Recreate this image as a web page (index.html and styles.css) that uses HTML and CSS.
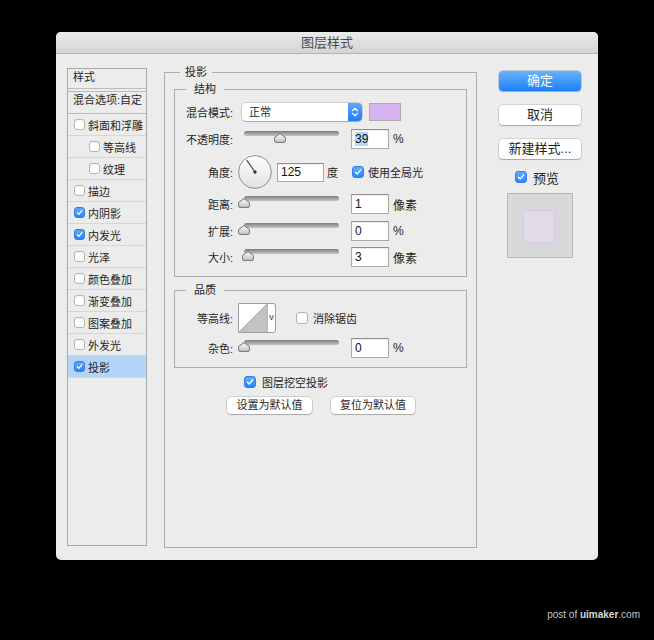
FILE: index.html
```html
<!DOCTYPE html>
<html lang="zh-CN">
<head>
<meta charset="utf-8">
<title>图层样式</title>
<link rel="stylesheet" href="styles.css">
</head>
<body>
<svg class="defs" width="0" height="0" aria-hidden="true">
  <defs>
    <linearGradient id="thumbGrad" x1="0" y1="0" x2="0" y2="1">
      <stop offset="0" stop-color="#fbfbfb"/>
      <stop offset="1" stop-color="#c4c4c4"/>
    </linearGradient>
    <linearGradient id="dialGrad" x1="0" y1="0" x2="0" y2="1">
      <stop offset="0" stop-color="#fefefe"/>
      <stop offset="1" stop-color="#e2e2e2"/>
    </linearGradient>
  </defs>
</svg>
<div class="dialog">
  <div class="titlebar">图层样式</div>
  <div class="content">
    <div class="sidebar">
      <div class="side-head">样式</div>
      <div class="side-blend">混合选项:自定</div>
      <div class="side-item"><span class="cb"></span>斜面和浮雕</div>
      <div class="side-item sub"><span class="cb"></span>等高线</div>
      <div class="side-item sub"><span class="cb"></span>纹理</div>
      <div class="side-item"><span class="cb"></span>描边</div>
      <div class="side-item"><span class="cb on"><svg viewBox="0 0 12 12"><path d="M3 6.2l2.1 2.3L9.1 3.4" fill="none" stroke="#fff" stroke-width="1.7" stroke-linecap="round" stroke-linejoin="round"/></svg></span>内阴影</div>
      <div class="side-item"><span class="cb on"><svg viewBox="0 0 12 12"><path d="M3 6.2l2.1 2.3L9.1 3.4" fill="none" stroke="#fff" stroke-width="1.7" stroke-linecap="round" stroke-linejoin="round"/></svg></span>内发光</div>
      <div class="side-item"><span class="cb"></span>光泽</div>
      <div class="side-item"><span class="cb"></span>颜色叠加</div>
      <div class="side-item"><span class="cb"></span>渐变叠加</div>
      <div class="side-item"><span class="cb"></span>图案叠加</div>
      <div class="side-item"><span class="cb"></span>外发光</div>
      <div class="side-item selected"><span class="cb on"><svg viewBox="0 0 12 12"><path d="M3 6.2l2.1 2.3L9.1 3.4" fill="none" stroke="#fff" stroke-width="1.7" stroke-linecap="round" stroke-linejoin="round"/></svg></span>投影</div>
    </div>

    <div class="main">
      <fieldset class="outer">
        <legend class="legend-outer">投影</legend>
        <div class="outer-body">
          <fieldset class="inner">
            <legend class="legend-inner">结构</legend>
            <div class="inner-body struct">
              <div class="row r-blend">
                <span class="label">混合模式:</span>
                <div class="select">
                  <span class="select-text">正常</span>
                  <span class="stepper"><svg width="14" height="18" viewBox="0 0 14 18"><path d="M4.6 7.6L7 5.2l2.4 2.4M4.6 10.4L7 12.8l2.4-2.4" fill="none" stroke="#fff" stroke-width="1.3" stroke-linecap="round" stroke-linejoin="round"/></svg></span>
                </div>
                <span class="swatch"></span>
              </div>
              <div class="row r-opacity">
                <span class="label">不透明度:</span>
                <div class="slider">
                  <div class="track"></div>
                  <svg class="thumb" style="left:36px" width="12" height="10" viewBox="0 0 12 10"><path d="M6 0.6L11.4 4.4V8Q11.4 9.4 10 9.4H2Q0.6 9.4 0.6 8V4.4Z" fill="url(#thumbGrad)" stroke="#767676"/></svg>
                </div>
                <span class="field w38"><span class="sel">39</span></span>
                <span class="unit">%</span>
              </div>
              <div class="row r-angle">
                <span class="label">角度:</span>
                <svg class="dial" width="34" height="34" viewBox="0 0 34 34">
                  <circle cx="17" cy="17" r="16.4" fill="url(#dialGrad)" stroke="#8f8f8f" stroke-width="1"/>
                  <line x1="17" y1="17" x2="9" y2="5.6" stroke="#4a4a4a" stroke-width="1.2" stroke-linecap="round"/>
                  <circle cx="17" cy="17" r="1.7" fill="#333"/>
                </svg>
                <span class="field w47 h19">125</span>
                <span class="unit deg">度</span>
                <span class="cb on global"><svg viewBox="0 0 12 12"><path d="M3 6.2l2.1 2.3L9.1 3.4" fill="none" stroke="#fff" stroke-width="1.7" stroke-linecap="round" stroke-linejoin="round"/></svg></span>
                <span class="cb-text">使用全局光</span>
              </div>
              <div class="row r-dist">
                <span class="label">距离:</span>
                <div class="slider">
                  <div class="track"></div>
                  <svg class="thumb" style="left:0px" width="12" height="10" viewBox="0 0 12 10"><path d="M6 0.6L11.4 4.4V8Q11.4 9.4 10 9.4H2Q0.6 9.4 0.6 8V4.4Z" fill="url(#thumbGrad)" stroke="#767676"/></svg>
                </div>
                <span class="field w38">1</span>
                <span class="unit">像素</span>
              </div>
              <div class="row r-spread">
                <span class="label">扩展:</span>
                <div class="slider">
                  <div class="track"></div>
                  <svg class="thumb" style="left:0px" width="12" height="10" viewBox="0 0 12 10"><path d="M6 0.6L11.4 4.4V8Q11.4 9.4 10 9.4H2Q0.6 9.4 0.6 8V4.4Z" fill="url(#thumbGrad)" stroke="#767676"/></svg>
                </div>
                <span class="field w38">0</span>
                <span class="unit">%</span>
              </div>
              <div class="row r-size">
                <span class="label">大小:</span>
                <div class="slider">
                  <div class="track"></div>
                  <svg class="thumb" style="left:4px" width="12" height="10" viewBox="0 0 12 10"><path d="M6 0.6L11.4 4.4V8Q11.4 9.4 10 9.4H2Q0.6 9.4 0.6 8V4.4Z" fill="url(#thumbGrad)" stroke="#767676"/></svg>
                </div>
                <span class="field w38">3</span>
                <span class="unit">像素</span>
              </div>
            </div>
          </fieldset>

          <fieldset class="inner quality">
            <legend class="legend-inner">品质</legend>
            <div class="inner-body qual">
              <div class="row r-contour">
                <span class="label">等高线:</span>
                <div class="contour">
                  <svg width="28" height="28" viewBox="0 0 28 28"><rect width="28" height="28" fill="#fff"/><polygon points="0,28 28,0 28,28" fill="#c2c2c2"/><line x1="0" y1="28" x2="28" y2="0" stroke="#9a9a9a" stroke-width="0.8"/></svg>
                  <span class="contour-drop">v</span>
                </div>
                <span class="cb anti"></span>
                <span class="cb-text">消除锯齿</span>
              </div>
              <div class="row r-noise">
                <span class="label">杂色:</span>
                <div class="slider">
                  <div class="track"></div>
                  <svg class="thumb" style="left:0px" width="12" height="10" viewBox="0 0 12 10"><path d="M6 0.6L11.4 4.4V8Q11.4 9.4 10 9.4H2Q0.6 9.4 0.6 8V4.4Z" fill="url(#thumbGrad)" stroke="#767676"/></svg>
                </div>
                <span class="field w38">0</span>
                <span class="unit">%</span>
              </div>
            </div>
          </fieldset>

          <div class="knock">
            <span class="cb on"><svg viewBox="0 0 12 12"><path d="M3 6.2l2.1 2.3L9.1 3.4" fill="none" stroke="#fff" stroke-width="1.7" stroke-linecap="round" stroke-linejoin="round"/></svg></span>
            <span class="cb-text">图层挖空投影</span>
          </div>
          <div class="defaults">
            <button class="small-btn b1" type="button">设置为默认值</button>
            <button class="small-btn b2" type="button">复位为默认值</button>
          </div>
        </div>
      </fieldset>
    </div>

    <div class="actions">
      <button class="btn primary" type="button">确定</button>
      <button class="btn" type="button">取消</button>
      <button class="btn" type="button">新建样式...</button>
      <div class="preview-check">
        <span class="cb on"><svg viewBox="0 0 12 12"><path d="M3 6.2l2.1 2.3L9.1 3.4" fill="none" stroke="#fff" stroke-width="1.7" stroke-linecap="round" stroke-linejoin="round"/></svg></span>
        <span class="preview-text">预览</span>
      </div>
      <div class="preview-box"><div class="preview-inner"></div></div>
    </div>
  </div>
</div>
<div class="watermark">post of <b>uimaker</b>.com</div>
</body>
</html>
```

FILE: styles.css
```css
* { box-sizing: border-box; }

html, body {
  margin: 0;
  padding: 0;
}

body {
  width: 654px;
  height: 640px;
  overflow: hidden;
  background: #000;
  font-family: "Liberation Sans", "Noto Sans CJK SC", sans-serif;
  font-size: 11px;
  color: #1f1f1f;
}

.defs { position: absolute; width: 0; height: 0; }

.dialog {
  width: 542px;
  height: 528px;
  margin: 32px 0 0 56px;
  background: #ececec;
  border-radius: 5px;
  overflow: hidden;
}

.titlebar {
  height: 22px;
  line-height: 21px;
  text-align: center;
  font-size: 13px;
  color: #4b4b4b;
  background: linear-gradient(#ebebeb, #d4d4d4);
  border-bottom: 1px solid #b4b4b4;
}

.content {
  display: flex;
  align-items: flex-start;
  padding: 10px 0 0 11px;
}

/* ---------- sidebar ---------- */
.sidebar {
  width: 80px;
  height: 478px;
  margin-top: 4px;
  border: 1px solid #a8a8a8;
  background: #ececec;
}

.side-head {
  height: 20px;
  line-height: 16px;
  padding-left: 5px;
  border-bottom: 1px solid #bcbcbc;
}

.side-blend {
  height: 23px;
  margin-top: 2px;
  line-height: 17px;
  padding-left: 5px;
  border-top: 1px solid #bcbcbc;
  border-bottom: 1px solid #bcbcbc;
}

.side-item {
  height: 22px;
  display: flex;
  align-items: center;
  padding-left: 6px;
  border-bottom: 1px solid #d7d7d7;
}

.side-item.sub { padding-left: 21px; }

.side-item.selected { background: #b5d5f6; }

.side-item .cb {
  width: 11px;
  height: 11px;
  margin-right: 3px;
}

/* ---------- checkboxes ---------- */
.cb {
  display: inline-flex;
  flex: none;
  width: 12px;
  height: 12px;
  border: 1px solid #b3b3b3;
  border-radius: 3px;
  background: #fff;
  box-shadow: inset 0 1px 0 rgba(0, 0, 0, 0.04);
}

.cb.on {
  border-color: #2f7fe8;
  background: linear-gradient(#63acfc, #2b85f7);
}

.cb svg { width: 100%; height: 100%; display: block; }

.cb-text { margin-left: 4px; }

/* ---------- main ---------- */
.main {
  width: 313px;
  height: 484px;
  margin-left: 17px;
  display: flex;
  flex-direction: column;
}

fieldset {
  margin: 0;
  padding: 0;
  min-width: 0;
  border: 1px solid #adadad;
}

legend {
  line-height: 16px;
  font-size: 11px;
}

.outer { flex: 1; }

.legend-outer {
  margin-left: 15px;
  padding: 0 5px;
}

.outer-body { padding: 0 9px; }

.inner { margin-top: 1px; }

.inner.quality { margin-top: 5px; }

.legend-inner {
  margin-left: 11px;
  padding: 0 8px;
}

.inner-body.struct { padding: 6px 0 9px; }
.inner-body.qual { padding: 5px 0 9px; }

.row {
  display: flex;
  align-items: center;
}

.label {
  width: 58px;
  margin-right: 9px;
  text-align: right;
  flex: none;
}

.r-blend { height: 18px; }
.r-opacity { height: 20px; margin-top: 8px; }
.r-angle { height: 34px; margin-top: 6px; }
.r-dist { height: 20px; margin-top: 5px; }
.r-spread { height: 20px; margin-top: 7px; }
.r-size { height: 20px; margin-top: 6px; }
.r-contour { height: 30px; }
.r-noise { height: 20px; margin-top: 5px; }

.select {
  display: flex;
  width: 120px;
  height: 18px;
  background: #fff;
  border-radius: 4px;
  box-shadow: 0 0 0 0.5px rgba(0, 0, 0, 0.25), 0 1px 1px rgba(0, 0, 0, 0.18);
}

.select-text {
  flex: 1;
  padding-left: 7px;
  line-height: 18px;
}

.stepper {
  width: 14px;
  height: 18px;
  border-radius: 0 4px 4px 0;
  background: linear-gradient(#5ea8fb, #1f7cf4);
}

.stepper svg { display: block; }

.swatch {
  width: 32px;
  height: 18px;
  margin-left: 7px;
  background: #d9b3f0;
  border: 1px solid #ababab;
}

.slider {
  position: relative;
  width: 103px;
  height: 20px;
  margin-left: -4px;
  flex: none;
}

.track {
  width: 95px;
  height: 5px;
  margin: 2px 0 0 6px;
  border-radius: 3px;
  background: linear-gradient(#7c7c7c, #a9a9a9 60%, #c4c4c4);
}

.thumb {
  position: absolute;
  top: 4px;
  display: block;
}

.field {
  display: inline-block;
  height: 20px;
  line-height: 18px;
  padding-left: 3px;
  background: #fff;
  border: 1px solid #a9a9a9;
  border-top-color: #8f8f8f;
  box-shadow: inset 0 1px 1px rgba(0, 0, 0, 0.08);
  font-size: 12px;
  color: #111;
  flex: none;
}

.w38 { width: 38px; margin-left: 10px; }
.w47 { width: 47px; margin-left: 5px; }
.h19 { height: 19px; line-height: 17px; }

.sel { background: #b3d7ff; }

.unit { margin-left: 4px; font-size: 12px; }
.unit.deg { margin-left: 3px; font-size: 11px; }

.dial {
  display: block;
  flex: none;
  margin-left: -4px;
}

.cb.global { margin-left: 14px; }

.contour {
  display: flex;
  width: 38px;
  height: 30px;
  margin-left: -4px;
  background: #fff;
  border: 1px solid #9d9d9d;
  border-radius: 0 3px 3px 0;
}

.contour svg { display: block; }

.contour-drop {
  width: 8px;
  border-left: 1px solid #b5b5b5;
  font-size: 9px;
  line-height: 26px;
  text-align: center;
  color: #333;
}

.cb.anti { margin-left: 20px; }
.r-contour .cb-text { margin-left: 5px; }

.knock {
  display: flex;
  align-items: center;
  height: 16px;
  margin-top: 6px;
  padding-left: 70px;
}

.knock .cb-text { margin-left: 6px; }

.defaults {
  display: flex;
  margin-top: 7px;
  padding-left: 53px;
  gap: 19px;
}

.small-btn {
  height: 17px;
  padding: 0;
  border: none;
  border-radius: 4px;
  background: #fff;
  box-shadow: 0 0 0 0.5px rgba(0, 0, 0, 0.25), 0 1px 1px rgba(0, 0, 0, 0.18);
  font-family: inherit;
  font-size: 11px;
  line-height: 17px;
  color: #1f1f1f;
}

.b1 { width: 85px; }
.b2 { width: 84px; }

/* ---------- right actions ---------- */
.actions {
  width: 82px;
  margin: 7px 0 0 22px;
  display: flex;
  flex-direction: column;
}

.btn {
  height: 20px;
  width: 82px;
  padding: 0;
  border: none;
  border-radius: 4px;
  background: #fff;
  box-shadow: 0 0 0 0.5px rgba(0, 0, 0, 0.22), 0 1px 1px rgba(0, 0, 0, 0.2);
  font-family: inherit;
  font-size: 13px;
  line-height: 20px;
  color: #1f1f1f;
}

.btn + .btn { margin-top: 14px; }

.btn.primary {
  background: linear-gradient(#6ab2fb, #1a80f8);
  color: #fff;
  box-shadow: 0 0 0 0.5px rgba(0, 60, 160, 0.35), 0 1px 1px rgba(0, 0, 0, 0.18);
}

.preview-check {
  display: flex;
  align-items: center;
  height: 16px;
  margin-top: 10px;
  padding-left: 16px;
}

.preview-text {
  margin-left: 6px;
  font-size: 13px;
}

.preview-box {
  width: 66px;
  height: 65px;
  margin: 8px 0 0 8px;
  padding: 16px 0 0 15px;
  background: #d8d8d8;
  border: 1px solid #b7b7b7;
}

.preview-inner {
  width: 32px;
  height: 33px;
  background: #e2dae7;
  border: 1px solid #dccbe6;
}

/* ---------- watermark ---------- */
.watermark {
  margin-top: 49px;
  padding-right: 14px;
  text-align: right;
  font-size: 10px;
  line-height: 12px;
  color: #c4c4c4;
}

.watermark b { color: #d8d8d8; }
```
